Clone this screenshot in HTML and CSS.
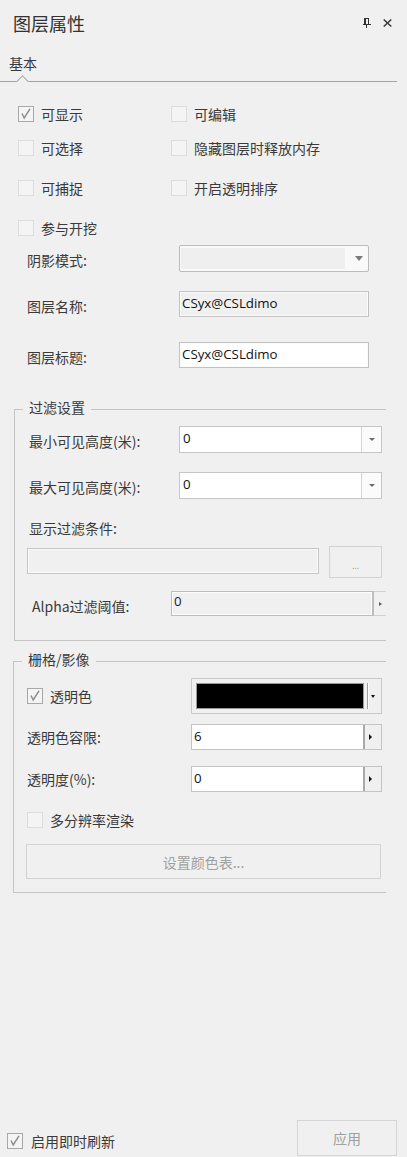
FILE: index.html
```html
<!DOCTYPE html>
<html lang="zh-CN">
<head>
<meta charset="utf-8">
<title>图层属性</title>
<link rel="stylesheet" href="styles.css">
</head>
<body>
<div class="panel">
  <header class="header">
    <h1 class="title">图层属性</h1>
    <div class="tools">
      <svg class="pin" width="8" height="10" viewBox="0 0 8 10">
        <rect x="1" y="0" width="2" height="7" fill="#333"/>
        <rect x="3" y="0" width="2" height="1" fill="#333"/>
        <rect x="5" y="0" width="1" height="7" fill="#333"/>
        <rect x="0" y="6" width="8" height="1" fill="#333"/>
        <rect x="3" y="7" width="1" height="3" fill="#333"/>
      </svg>
      <svg class="close" width="9" height="8" viewBox="0 0 9 8">
        <path d="M0.7 0.5 L8.3 7.5 M8.3 0.5 L0.7 7.5" stroke="#3a3a3a" stroke-width="1.5" fill="none"/>
      </svg>
    </div>
  </header>

  <div class="tabbar">
    <span class="tab">基本</span>
    <span class="tab-caret"></span>
  </div>

  <div class="checks">
    <div class="chk-line">
      <label class="chk col1"><span class="cb on"><svg width="14" height="14" viewBox="0 0 14 14"><path d="M3 6.5 L5.2 11 L11 1.8" stroke="#8e8e8e" stroke-width="1.5" fill="none"/></svg></span><span class="chk-text">可显示</span></label>
      <label class="chk"><span class="cb"></span><span class="chk-text">可编辑</span></label>
    </div>
    <div class="chk-line tight">
      <label class="chk col1"><span class="cb"></span><span class="chk-text">可选择</span></label>
      <label class="chk"><span class="cb"></span><span class="chk-text">隐藏图层时释放内存</span></label>
    </div>
    <div class="chk-line">
      <label class="chk col1"><span class="cb"></span><span class="chk-text">可捕捉</span></label>
      <label class="chk"><span class="cb"></span><span class="chk-text">开启透明排序</span></label>
    </div>
    <div class="chk-line">
      <label class="chk col1"><span class="cb"></span><span class="chk-text">参与开挖</span></label>
    </div>
  </div>

  <div class="form">
    <div class="frow r1">
      <span class="flabel">阴影模式:</span>
      <div class="select">
        <span class="select-field"></span>
        <span class="select-btn"><span class="tri-down gray"></span></span>
      </div>
    </div>
    <div class="frow r2">
      <span class="flabel">图层名称:</span>
      <div class="tbox disabled">CSyx@CSLdimo</div>
    </div>
    <div class="frow r3">
      <span class="flabel">图层标题:</span>
      <div class="tbox">CSyx@CSLdimo</div>
    </div>
  </div>

  <fieldset class="group g1">
    <legend class="legend">过滤设置</legend>
    <div class="grow c1">
      <span class="glabel">最小可见高度(米):</span>
      <div class="combo">
        <span class="combo-field">0</span>
        <span class="combo-btn"><span class="tri-down small"></span></span>
      </div>
    </div>
    <div class="grow c2">
      <span class="glabel">最大可见高度(米):</span>
      <div class="combo">
        <span class="combo-field">0</span>
        <span class="combo-btn"><span class="tri-down small"></span></span>
      </div>
    </div>
    <div class="cond-label">显示过滤条件:</div>
    <div class="cond-row">
      <div class="cond-field"></div>
      <button class="dots-btn" type="button">...</button>
    </div>
    <div class="grow alpha">
      <span class="glabel alpha-label">Alpha过滤阈值:</span>
      <div class="alpha-spin">
        <span class="alpha-field">0</span>
        <span class="alpha-btn"><span class="tri-right gray"></span></span>
      </div>
    </div>
  </fieldset>

  <fieldset class="group g2">
    <legend class="legend">栅格/影像</legend>
    <div class="grow2 k1">
      <label class="chk klabel"><span class="cb on"><svg width="14" height="14" viewBox="0 0 14 14"><path d="M3 6.5 L5.2 11 L11 1.8" stroke="#8e8e8e" stroke-width="1.5" fill="none"/></svg></span><span class="chk-text">透明色</span></label>
      <div class="picker">
        <span class="swatch"></span>
        <span class="picker-div"></span>
        <span class="picker-btn"><span class="tri-down black"></span></span>
      </div>
    </div>
    <div class="grow2 k2">
      <span class="klabel">透明色容限:</span>
      <div class="spin">
        <span class="spin-field">6</span>
        <span class="spin-btn"><span class="tri-right"></span></span>
      </div>
    </div>
    <div class="grow2 k3">
      <span class="klabel">透明度(%):</span>
      <div class="spin">
        <span class="spin-field">0</span>
        <span class="spin-btn"><span class="tri-right"></span></span>
      </div>
    </div>
    <div class="grow2 k4">
      <label class="chk"><span class="cb"></span><span class="chk-text">多分辨率渲染</span></label>
    </div>
    <button class="wide-btn" type="button">设置颜色表...</button>
  </fieldset>

  <div class="spacer"></div>

  <footer class="footer">
    <label class="chk foot-chk"><span class="cb on"><svg width="14" height="14" viewBox="0 0 14 14"><path d="M3 6.5 L5.2 11 L11 1.8" stroke="#8e8e8e" stroke-width="1.5" fill="none"/></svg></span><span class="chk-text foot-text">启用即时刷新</span></label>
    <button class="apply-btn" type="button">应用</button>
  </footer>
</div>
</body>
</html>
```

FILE: styles.css
```css
* { box-sizing: border-box; }
html, body { margin: 0; padding: 0; }
body {
  background: #f0f0f0;
  font-family: "Noto Sans CJK SC", "Noto Sans", sans-serif;
  font-size: 14px;
  line-height: 20px;
  color: #3a3a3a;
}
.panel {
  width: 407px;
  height: 1157px;
  display: flex;
  flex-direction: column;
  overflow: hidden;
}

/* header */
.header {
  height: 47px;
  display: flex;
  align-items: center;
  padding-left: 13px;
  padding-right: 15px;
}
.title {
  margin: 0;
  flex: 1;
  font-size: 18px;
  font-weight: normal;
  line-height: 47px;
  color: #333;
}
.tools { display: flex; align-items: center; margin-top: -2px; }
.pin { display: block; margin-right: 12px; }
.close { display: block; }

/* tab */
.tabbar {
  position: relative;
  width: 397px;
  height: 35px;
  border-bottom: 1px solid #a3a3a3;
}
.tab {
  display: block;
  margin-top: 6px;
  padding-left: 9px;
  line-height: 20px;
  color: #3a3a3a;
}
.tab-caret {
  position: absolute;
  left: 18px;
  top: 30px;
  width: 9px;
  height: 9px;
  background: #f0f0f0;
  border-top: 1px solid #a3a3a3;
  border-left: 1px solid #a3a3a3;
  transform: rotate(45deg);
}

/* checkboxes */
.checks { padding: 22px 0 0 18px; }
.chk-line { display: flex; height: 20px; margin-top: 20px; }
.chk-line:first-child { margin-top: 0; }
.chk-line.tight { margin-top: 14px; }
.chk { display: flex; align-items: center; height: 20px; }
.col1 { width: 153px; }
.cb {
  width: 16px;
  height: 16px;
  flex: none;
  border: 1px solid #dcdcdc;
  background: #f4f4f4;
  display: flex;
  align-items: center;
  justify-content: center;
}
.cb.on { border-color: #a8a8a8; }
.cb svg { display: block; }
.chk-text { margin-left: 7px; color: #3a3a3a; }

/* top form */
.form { padding-top: 7px; }
.frow { display: flex; align-items: center; }
.frow.r1 { height: 27px; }
.frow.r2 { height: 26px; margin-top: 19px; }
.frow.r3 { height: 26px; margin-top: 25px; }
.flabel { width: 179px; padding-left: 27px; padding-top: 3px; flex: none; }
.select {
  width: 190px;
  height: 27px;
  border: 1px solid #bcbcbc;
  border-radius: 2px;
  background: #f9f9f9;
  display: flex;
  padding: 2px 0 2px 1px;
}
.select-field { width: 164px; background: #efefef; }
.select-btn { flex: 1; display: flex; align-items: center; justify-content: center; padding-left: 4px; }
.tbox {
  width: 190px;
  height: 26px;
  border: 1px solid #c2c2c2;
  box-shadow: inset 0 0 0 1px #fbfbfb;
  background: #fff;
  padding-left: 2px;
  font-family: "Open Sans", "Noto Sans", sans-serif;
  font-size: 13.3px;
  line-height: 23px;
  color: #111;
}
.tbox.disabled { background: #f0f0f0; }

/* triangles */
.tri-down {
  width: 0; height: 0;
  border-left: 4px solid transparent;
  border-right: 4px solid transparent;
  border-top: 5px solid #7a7a7a;
}
.tri-down.small {
  border-left-width: 3.5px;
  border-right-width: 3.5px;
  border-top: 3px solid #6a6a6a;
}
.tri-down.black {
  border-left: 2.5px solid transparent;
  border-right: 2.5px solid transparent;
  border-top: 3px solid #111;
}
.tri-right {
  width: 0; height: 0;
  border-top: 3px solid transparent;
  border-bottom: 3px solid transparent;
  border-left: 3px solid #111;
}
.tri-right.gray { border-left-color: #5a5a5a; border-top-width: 2.5px; border-bottom-width: 2.5px; }

/* groups */
.group {
  margin: 0;
  padding: 0;
  min-inline-size: 0;
  border: 1px solid #c4c4c4;
  border-right: none;
}
.legend {
  margin-left: 8px;
  padding: 0 6px 4px;
  line-height: 16px;
  color: #3a3a3a;
}
.g1 { margin: 31px 0 0 14px; width: 372px; padding-bottom: 24px; }
.g2 { margin: 10px 0 0 13px; width: 373px; padding-bottom: 13px; }

.grow { display: flex; align-items: center; }
.glabel { width: 164px; padding-left: 14px; padding-top: 2px; flex: none; }
.grow.c1 { margin-top: 7px; height: 27px; }
.grow.c2 { margin-top: 19px; height: 27px; }
.combo {
  width: 203px;
  height: 27px;
  border: 1px solid #c6c6c6;
  background: #fff;
  display: flex;
}
.combo-field {
  flex: 1;
  padding-left: 3px;
  font-family: "Open Sans", "Noto Sans", sans-serif;
  font-size: 13.3px;
  line-height: 22px;
  color: #111;
}
.combo-btn {
  width: 20px;
  border-left: 1px solid #d4d4d4;
  background: #fbfbfb;
  display: flex;
  align-items: center;
  justify-content: center;
}
.cond-label { margin-top: 19px; padding-left: 14px; line-height: 20px; }
.cond-row { display: flex; margin-top: 8px; padding-left: 12px; height: 32px; }
.cond-field {
  width: 292px;
  height: 26px;
  margin-top: 2px;
  border: 1px solid #c6c6c6;
  box-shadow: inset 0 0 0 1px #fafafa;
  background: #f0f0f0;
}
.dots-btn {
  margin-left: 10px;
  width: 53px;
  height: 32px;
  border: 1px solid #d3d3d3;
  background: #f0f0f0;
  padding: 0;
  font-family: "Noto Sans", sans-serif;
  font-size: 9px;
  line-height: 30px;
  color: #999;
  padding-top: 4px;
}
.grow.alpha { margin-top: 13px; height: 25px; }
.alpha-label { width: 156px; padding-left: 17px; padding-top: 5px; }
.alpha-spin { display: flex; height: 25px; width: 215px; }
.alpha-field {
  width: 203px;
  border: 1px solid #bdbdbd;
  border-right-width: 2px;
  box-shadow: inset 0 0 0 1px #fdfdfd;
  background: #f0f0f0;
  padding-left: 2px;
  font-family: "Open Sans", "Noto Sans", sans-serif;
  font-size: 13.3px;
  line-height: 19px;
  color: #222;
}
.alpha-btn {
  flex: 1;
  border-top: 1px solid #d0d0d0;
  border-bottom: 1px solid #d0d0d0;
  display: flex;
  align-items: center;
  padding-left: 5px;
}

.grow2 { display: flex; align-items: center; }
.klabel { width: 177px; padding-left: 13px; flex: none; }
.grow2.k1 { margin-top: 7px; height: 36px; }
.grow2.k2 { margin-top: 10px; height: 26px; }
.grow2.k3 { margin-top: 16px; height: 26px; }
.grow2.k4 { margin-top: 18px; height: 20px; padding-left: 13px; }
.picker {
  width: 191px;
  height: 36px;
  border: 1px solid #c8c8c8;
  background: #f0f0f0;
  padding: 4px;
  display: flex;
}
.swatch {
  width: 168px;
  height: 26px;
  background: #000;
  border: 1px solid #9a9a9a;
}
.picker-div {
  margin-left: 3px;
  width: 2px;
  border-left: 1px solid #a0a0a0;
  border-right: 1px solid #fff;
}
.picker-btn { flex: 1; display: flex; align-items: center; justify-content: center; padding-top: 1px; }
.spin {
  width: 191px;
  height: 26px;
  border: 1px solid #c4c4c4;
  background: #fff;
  display: flex;
}
.spin-field {
  flex: 1;
  padding-left: 2px;
  font-family: "Open Sans", "Noto Sans", sans-serif;
  font-size: 13.3px;
  line-height: 23px;
  color: #111;
}
.spin-btn {
  width: 18px;
  border-left: 2px solid #a9a9a9;
  background: #f0f0f0;
  display: flex;
  align-items: center;
  padding-left: 4px;
}
.wide-btn {
  display: block;
  margin: 14px 0 0 12px;
  width: 355px;
  height: 35px;
  border: 1px solid #d3d3d3;
  background: #f0f0f0;
  font-family: "Noto Sans CJK SC", sans-serif;
  font-size: 14px;
  color: #a0a0a0;
  padding: 0;
}

/* footer */
.spacer { flex: 1; }
.footer {
  height: 37px;
  display: flex;
  align-items: flex-start;
  justify-content: space-between;
  padding: 0 10px 1px 7px;
}
.foot-chk { margin-top: 11px; }
.foot-text { margin-left: 8px; }
.apply-btn {
  width: 100px;
  height: 36px;
  border: 1px solid #d5d5d5;
  background: #f0f0f0;
  font-family: "Noto Sans CJK SC", sans-serif;
  font-size: 14px;
  color: #a0a0a0;
  padding: 0;
}
```
